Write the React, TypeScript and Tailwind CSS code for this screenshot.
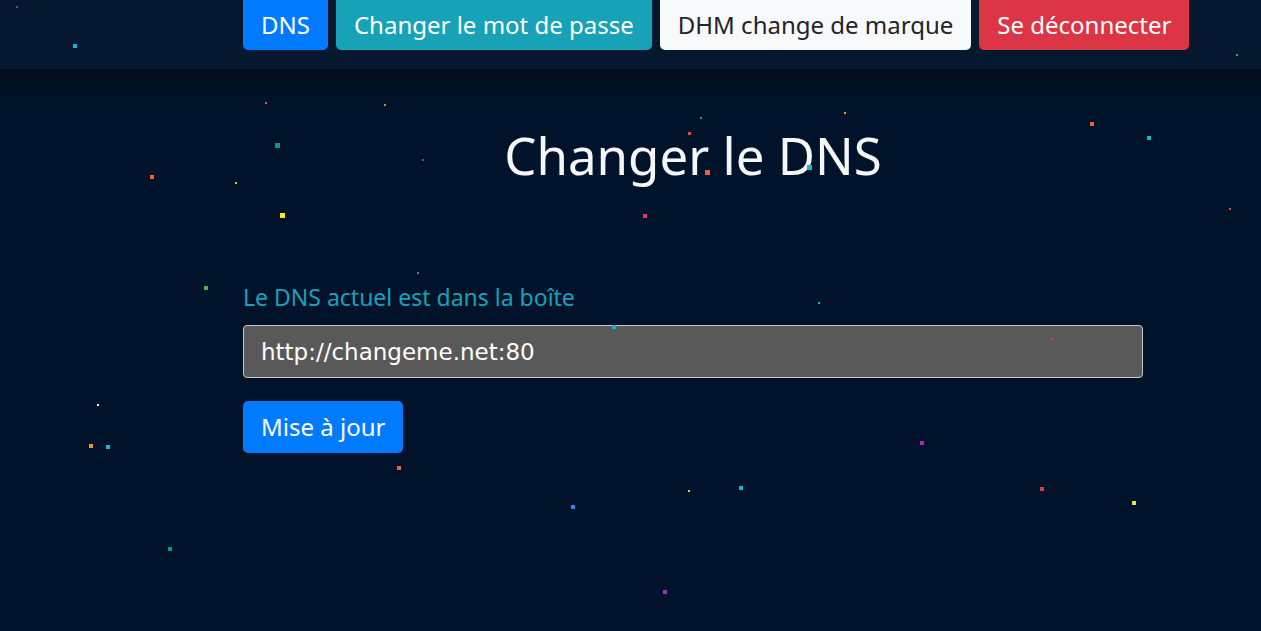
import React from 'react'

const dots: { x: number; y: number; s: number; c: string }[] = [
    { x: 16, y: 6, s: 2, c: '#6d3fc4' },
    { x: 73, y: 44, s: 4, c: '#12b8c9' },
    { x: 265, y: 102, s: 2, c: '#e8553a' },
    { x: 384, y: 104, s: 2, c: '#d68a1c' },
    { x: 275, y: 143, s: 5, c: '#109489' },
    { x: 150, y: 175, s: 4, c: '#f2602b' },
    { x: 235, y: 182, s: 2, c: '#c7d82a' },
    { x: 280, y: 213, s: 5, c: '#f6e52c' },
    { x: 422, y: 159, s: 2, c: '#7b35b8' },
    { x: 688, y: 132, s: 3, c: '#e9423c' },
    { x: 705, y: 170, s: 5, c: '#f0602b' },
    { x: 700, y: 117, s: 2, c: '#38a449' },
    { x: 807, y: 165, s: 5, c: '#11b8d0' },
    { x: 844, y: 112, s: 2, c: '#e3a01c' },
    { x: 643, y: 214, s: 4, c: '#e8306a' },
    { x: 1090, y: 122, s: 4, c: '#f2602b' },
    { x: 1147, y: 136, s: 4, c: '#11b8d0' },
    { x: 1229, y: 208, s: 2, c: '#d8433a' },
    { x: 1236, y: 54, s: 2, c: '#35a847' },
    { x: 417, y: 272, s: 2, c: '#2a85d8' },
    { x: 204, y: 286, s: 4, c: '#49b347' },
    { x: 818, y: 302, s: 2, c: '#11b8d0' },
    { x: 612, y: 325, s: 4, c: '#11b8d0' },
    { x: 1051, y: 338, s: 2, c: '#e23a55' },
    { x: 97, y: 404, s: 2, c: '#f5f5f5' },
    { x: 89, y: 444, s: 4, c: '#f2932b' },
    { x: 106, y: 445, s: 4, c: '#11b8d0' },
    { x: 397, y: 466, s: 4, c: '#f2602b' },
    { x: 920, y: 441, s: 4, c: '#a22ebf' },
    { x: 688, y: 490, s: 2, c: '#d8d82a' },
    { x: 739, y: 486, s: 4, c: '#11b8d0' },
    { x: 571, y: 505, s: 4, c: '#2a85e8' },
    { x: 1040, y: 487, s: 4, c: '#e23a45' },
    { x: 1132, y: 501, s: 4, c: '#e4e640' },
    { x: 168, y: 547, s: 4, c: '#109489' },
    { x: 663, y: 590, s: 4, c: '#a22ebf' },
]

const App = () => {
    return (
        <div className="relative min-h-[631px] bg-[#00132a] overflow-hidden" style={{ fontFamily: '"Noto Sans", sans-serif' }}>
            <header className="h-[69px] bg-[#061730] pl-[243px] flex gap-2 items-start">
                <button className="h-[50px] px-[18px] rounded-b-[5px] bg-[#007bff] text-white text-[24px]">DNS</button>
                <button className="h-[50px] px-[18px] rounded-b-[5px] bg-[#17a2b8] text-white text-[24px]">Changer le mot de passe</button>
                <button className="h-[50px] px-[18px] rounded-b-[5px] bg-[#f8f9fa] text-[#212529] text-[24px]">DHM change de marque</button>
                <button className="h-[50px] px-[18px] rounded-b-[5px] bg-[#dc3545] text-white text-[24px]">Se déconnecter</button>
            </header>
            <div className="h-[32px] bg-gradient-to-b from-[#010c1a] to-[#00132a]" />

            <main className="pl-[243px] w-[1143px]">
                <h1 className="text-center text-[51px] leading-[60px] text-[#f4f6f8] mt-[24px]">Changer le DNS</h1>

                <div className="mt-[97px]">
                    <label className="block text-[#17a2b8] text-[23px] leading-[30px]">Le DNS actuel est dans la boîte</label>
                    <input
                        defaultValue="http://changeme.net:80"
                        className="mt-[13px] block w-full h-[53px] px-[17px] rounded-[4px] border border-[#c8c8c8] bg-[#595959] text-white text-[23px] outline-none"
                        style={{ fontFamily: '"DejaVu Sans", sans-serif' }}
                    />
                    <button className="mt-[23px] h-[52px] px-[18px] rounded-[5px] bg-[#007bff] text-white text-[24px]">Mise à jour</button>
                </div>
            </main>

            {dots.map((d, i) => (
                <span
                    key={i}
                    className="absolute"
                    style={{ left: d.x, top: d.y, width: d.s, height: d.s, background: d.c }}
                />
            ))}
        </div>
    )
}

export default App
